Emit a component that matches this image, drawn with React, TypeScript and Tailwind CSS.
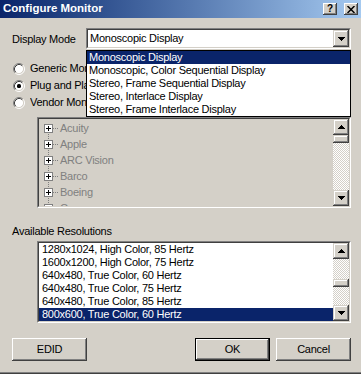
import React from "react";

const raisedBtn =
  "shadow-[inset_-1px_-1px_#404040,inset_1px_1px_#ffffff,inset_-2px_-2px_#808080,inset_2px_2px_#d4d0c8]";
const raisedScroll =
  "shadow-[inset_-1px_-1px_#404040,inset_1px_1px_#d4d0c8,inset_-2px_-2px_#808080,inset_2px_2px_#ffffff]";

function Sunken({ className, inner, children }: { className: string; inner: string; children: React.ReactNode }) {
  return (
    <div className={"border border-t-[#808080] border-l-[#808080] border-b-white border-r-white " + className}>
      <div className={"h-full w-full border border-t-[#404040] border-l-[#404040] border-b-[#d4d0c8] border-r-[#d4d0c8] " + inner}>
        {children}
      </div>
    </div>
  );
}

function Arrow({ up }: { up?: boolean }) {
  return (
    <svg width="7" height="4" viewBox="0 0 7 4" shapeRendering="crispEdges" className={up ? "" : "rotate-180"}>
      <rect x="3" y="0" width="1" height="1" fill="#000" />
      <rect x="2" y="1" width="3" height="1" fill="#000" />
      <rect x="1" y="2" width="5" height="1" fill="#000" />
      <rect x="0" y="3" width="7" height="1" fill="#000" />
    </svg>
  );
}

function ScrollBar({ thumbClass }: { thumbClass: string }) {
  return (
    <div className="w-[16px] h-full flex flex-col shrink-0">
      <div className={"h-[16px] bg-[#d4d0c8] flex items-center justify-center " + raisedScroll}>
        <Arrow up />
      </div>
      <div className="flex-1 flex flex-col bg-[image:repeating-conic-gradient(#ffffff_0_25%,#d4d0c8_0_50%)] bg-[length:2px_2px]">
        <div className={"h-[8px] bg-[#d4d0c8] " + raisedScroll + " " + thumbClass} />
      </div>
      <div className={"h-[16px] bg-[#d4d0c8] flex items-center justify-center " + raisedScroll}>
        <Arrow />
      </div>
    </div>
  );
}

function Radio({ checked }: { checked?: boolean }) {
  return (
    <svg width="12" height="12" viewBox="0 0 12 12">
      <circle cx="6" cy="6" r="4.5" fill="#ffffff" />
      <path d="M2.11 9.89 A5.5 5.5 0 0 1 9.89 2.11" stroke="#808080" fill="none" />
      <path d="M9.89 2.11 A5.5 5.5 0 0 1 2.11 9.89" stroke="#ffffff" fill="none" />
      <path d="M2.82 9.18 A4.5 4.5 0 0 1 9.18 2.82" stroke="#404040" fill="none" />
      <path d="M9.18 2.82 A4.5 4.5 0 0 1 2.82 9.18" stroke="#d4d0c8" fill="none" />
      {checked && <rect x="4" y="4" width="4" height="4" rx="1.6" fill="#000" />}
    </svg>
  );
}

function TreeRow({ label, first }: { label: string; first?: boolean }) {
  return (
    <div className="h-[16px] flex items-center">
      <svg width="21" height="16" viewBox="0 0 21 16" shapeRendering="crispEdges" className="shrink-0">
        <line x1="9.5" y1={first ? 8 : 0} x2="9.5" y2="16" stroke="#808080" strokeDasharray="1 1" />
        <line x1="14" y1="8.5" x2="20" y2="8.5" stroke="#808080" strokeDasharray="1 1" />
        <rect x="5.5" y="4.5" width="8" height="8" fill="#ffffff" stroke="#808080" />
        <rect x="7" y="8" width="5" height="1" fill="#000" />
        <rect x="9" y="6" width="1" height="5" fill="#000" />
      </svg>
      <span className="text-[#808080] leading-[16px]">{label}</span>
    </div>
  );
}

export default function App() {
  const resolutions = [
    "1280x1024, High Color, 85 Hertz",
    "1600x1200, High Color, 75 Hertz",
    "640x480, True Color, 60 Hertz",
    "640x480, True Color, 75 Hertz",
    "640x480, True Color, 85 Hertz",
    "800x600, True Color, 60 Hertz",
  ];
  const modes = [
    "Monoscopic Display",
    "Monoscopic, Color Sequential Display",
    "Stereo, Frame Sequential Display",
    "Stereo, Interlace Display",
    "Stereo, Frame Interlace Display",
  ];
  return (
    <div className="relative w-[361px] h-[374px] bg-[#d4d0c8] flex flex-col overflow-hidden border-b border-b-[#404040] font-['Liberation_Sans',Arial,sans-serif] text-[11px] tracking-[-0.25px] text-black">
      {/* Title bar */}
      <div className="h-[18px] shrink-0 flex items-center bg-linear-to-r from-[#0a246a] to-[#a6caf0]">
        <span className="pl-[3px] text-white font-bold text-[11.5px] tracking-normal">Configure Monitor</span>
        <div className="ml-auto mr-[3px] flex items-center gap-[7px]">
          <div className={"w-[14px] h-[12px] bg-[#d4d0c8] flex items-center justify-center " + raisedBtn}>
            <span className="font-bold text-[10px] leading-[10px] tracking-normal">?</span>
          </div>
          <div className={"w-[14px] h-[12px] bg-[#d4d0c8] flex items-center justify-center " + raisedBtn}>
            <svg width="8" height="7" viewBox="0 0 8 7">
              <path d="M0.5 0 L7.5 7 M7.5 0 L0.5 7" stroke="#000" strokeWidth="1.5" />
            </svg>
          </div>
        </div>
      </div>

      {/* Body */}
      <div className="flex-1 flex flex-col pl-[12px] pr-[10px] border-b border-b-[#808080]">
        <div className="mt-[10px] h-[21px] flex items-center">
          <span className="w-[74px] pt-[2px]">Display Mode</span>
          <Sunken className="w-[265px] h-[21px]" inner="bg-white flex items-center">
            <span className="flex-1 pl-[2px]">Monoscopic Display</span>
            <div className={"w-[16px] h-full bg-[#d4d0c8] flex items-center justify-center " + raisedScroll}>
              <Arrow />
            </div>
          </Sunken>
        </div>

        <div className="mt-[13px] flex flex-col gap-[4px]">
          {[
            ["Generic Monitor", false],
            ["Plug and Play Monitor", true],
            ["Vendor Monitor", false],
          ].map(([l, c]) => (
            <div key={l as string} className="h-[13px] flex items-center">
              <div className="ml-[1px] flex">
                <Radio checked={c as boolean} />
              </div>
              <span className="ml-[5px] leading-[13px] w-[56px] overflow-hidden whitespace-nowrap">{l as string}</span>
            </div>
          ))}
        </div>

        <Sunken className="mt-[8px] ml-[25px] w-[314px] h-[91px]" inner="bg-[#d4d0c8] flex">
          <div className="flex-1 overflow-hidden pt-[1px] pl-[0px]">
            <TreeRow label="Acuity" first />
            <TreeRow label="Apple" />
            <TreeRow label="ARC Vision" />
            <TreeRow label="Barco" />
            <TreeRow label="Boeing" />
            <TreeRow label="Canon" />
          </div>
          <ScrollBar thumbClass="" />
        </Sunken>

        <div className="mt-[17px] h-[13px] leading-[13px]">Available Resolutions</div>

        <Sunken className="mt-[3px] ml-[25px] w-[314px] h-[82px]" inner="bg-white flex">
          <div className="flex-1 flex flex-col overflow-hidden">
            {resolutions.map((r, i) => (
              <div
                key={r}
                className={
                  "h-[13px] leading-[13px] pl-[3px] whitespace-nowrap " +
                  (i === 5 ? "bg-[#0a246a] text-white" : "")
                }
              >
                {r}
              </div>
            ))}
          </div>
          <ScrollBar thumbClass="mt-[20px]" />
        </Sunken>

        <div className="mt-[15px] flex">
          <div className={"w-[75px] h-[23px] bg-[#d4d0c8] flex items-center justify-center " + raisedBtn}>EDID</div>
          <div className="ml-auto w-[75px] h-[23px] border border-black">
            <div className={"w-full h-full bg-[#d4d0c8] flex items-center justify-center " + raisedBtn}>OK</div>
          </div>
          <div className={"ml-[6px] w-[75px] h-[23px] bg-[#d4d0c8] flex items-center justify-center " + raisedBtn}>
            Cancel
          </div>
        </div>
      </div>

      {/* Dropdown list overlay */}
      <div className="absolute left-[86px] top-[50px] w-[265px] h-[67px] border border-black bg-white flex flex-col">
        {modes.map((m, i) => (
          <div
            key={m}
            className={"h-[13px] leading-[13px] pl-[2px] whitespace-nowrap " + (i === 0 ? "bg-[#0a246a] text-white" : "")}
          >
            {m}
          </div>
        ))}
      </div>
    </div>
  );
}
